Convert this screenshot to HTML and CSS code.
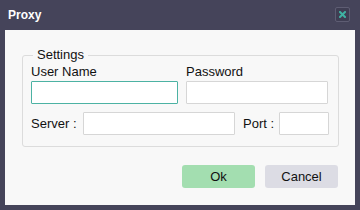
FILE: index.html
```html
<!DOCTYPE html>
<html lang="en">
<head>
  <meta charset="UTF-8" />
  <title>Proxy</title>
  <link rel="stylesheet" href="styles.css">
</head>
<body>

  <div class="dialog">
    <div class="title-bar">
      <span class="title">Proxy</span>
      <button class="close-btn" aria-label="Close">
        <svg width="7" height="7" viewBox="0 0 7 7">
          <path d="M1 1 L6 6 M6 1 L1 6" stroke="#3fb3a3" stroke-width="2" stroke-linecap="square" />
        </svg>
      </button>
    </div>

    <div class="panel">
      <fieldset class="settings">
        <legend>Settings</legend>

        <div class="cred-row">
          <div class="field">
            <span>User Name</span>
            <input type="text" class="input-active" />
          </div>
          <div class="field">
            <span>Password</span>
            <input type="password" />
          </div>
        </div>

        <div class="server-row">
          <span class="lbl-server">Server :</span>
          <input type="text" class="server-input" />
          <span class="lbl-port">Port :</span>
          <input type="text" class="port-input" />
        </div>
      </fieldset>

      <div class="actions">
        <button class="btn btn-ok">Ok</button>
        <button class="btn btn-cancel">Cancel</button>
      </div>
    </div>
  </div>

</body>
</html>
```

FILE: styles.css
```css
body {
  margin: 0;
  font-family: "Liberation Sans", Arial, sans-serif;
  font-size: 12px;
  background: #45445a;
}

.dialog {
  width: 360px;
  height: 210px;
  box-sizing: border-box;
  padding: 0 5px 5px;
  display: flex;
  flex-direction: column;
}

.title-bar {
  height: 30px;
  display: flex;
  align-items: center;
  justify-content: space-between;
  padding: 0 5px 0 3px;
}

.title {
  color: #fff;
  font-weight: bold;
  font-size: 12px;
}

.close-btn {
  width: 15px;
  height: 15px;
  margin-top: -1px;
  padding: 0;
  border: 1px solid #5e5d73;
  border-radius: 2px;
  background: #3f3e53;
  display: flex;
  align-items: center;
  justify-content: center;
}

.panel {
  flex: 1;
  background: #f8f8f8;
  padding: 17px 17px 0;
}

.settings {
  margin: 0;
  padding: 0 9px 11px 8px;
  border: 1px solid #dcdcdc;
  border-radius: 3px;
}

.settings legend {
  padding: 0 4px;
  margin-left: 2px;
  font-size: 13px;
  line-height: 16px;
  color: #111;
}

input {
  box-sizing: border-box;
  height: 23px;
  margin: 0;
  border: 1px solid #d6d6d6;
  border-radius: 1px;
  background: #fff;
  outline: none;
  font-family: inherit;
  font-size: 12px;
}

input.input-active {
  border-color: #4cb2a3;
}

.cred-row {
  display: grid;
  grid-template-columns: 147px 142px;
  column-gap: 8px;
  margin-top: 1px;
}

.field {
  display: flex;
  flex-direction: column;
  gap: 1px;
  color: #111;
  font-size: 13px;
  line-height: 16px;
}

.server-row {
  display: flex;
  align-items: center;
  margin-top: 8px;
  color: #111;
  font-size: 13px;
}

.lbl-server {
  width: 52px;
}

.server-input {
  width: 152px;
}

.lbl-port {
  width: 36px;
  margin-left: 8px;
}

.port-input {
  width: 50px;
}

.actions {
  display: flex;
  justify-content: flex-end;
  gap: 10px;
  margin-top: 18px;
}

.btn {
  width: 73px;
  height: 23px;
  border: none;
  border-radius: 3px;
  font-family: inherit;
  font-size: 13px;
  color: #111;
  padding: 0;
}

.btn-ok {
  background: #a3deb0;
}

.btn-cancel {
  background: #dcdce4;
}
```
